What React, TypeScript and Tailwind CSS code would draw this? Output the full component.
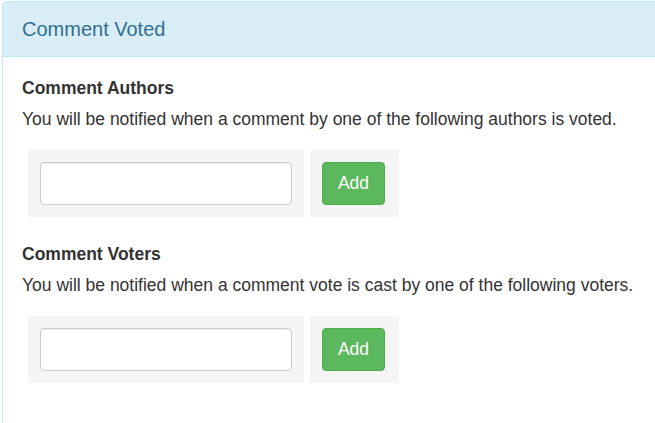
export default function App() {
  const sections = [
    {
      title: "Comment Authors",
      text: "You will be notified when a comment by one of the following authors is voted.",
    },
    {
      title: "Comment Voters",
      text: "You will be notified when a comment vote is cast by one of the following voters.",
    },
  ];

  return (
    <div className="w-[655px] h-[423px] overflow-hidden bg-white font-['Liberation_Sans',Arial,sans-serif] text-[#333]">
      <div className="ml-[2px] mt-[1px] w-[700px] h-[430px] border border-[#bce8f1] rounded-tl-[4px]">
        <div className="bg-[#d9edf7] border-b border-[#bce8f1] px-[19px] py-[15px] rounded-tl-[3px]">
          <h3 className="text-[20px] leading-[24px] text-[#31708f]">Comment Voted</h3>
        </div>
        <div className="px-[19px] pt-[19px]">
          {sections.map((s, i) => (
            <div key={s.title} className={i > 0 ? "mt-[25px]" : ""}>
              <h4 className="text-[17.5px] leading-[25px] font-bold mb-[6px]">{s.title}</h4>
              <p className="text-[17.5px] leading-[25px] mb-[18px]">{s.text}</p>
              <div className="flex gap-[6px] pl-[6px]">
                <div className="w-[276px] p-[12px] bg-[#f5f5f5]">
                  <input
                    type="text"
                    className="block w-full h-[43px] px-3 text-[17.5px] bg-white border border-[#ccc] rounded-[4px] shadow-[inset_0_1px_1px_rgba(0,0,0,0.075)] focus:outline-none"
                  />
                </div>
                <div className="w-[89px] p-[12px] bg-[#f5f5f5]">
                  <button
                    type="button"
                    className="w-[63px] h-[43px] text-[17.5px] text-white bg-[#5cb85c] border border-[#4cae4c] rounded-[4px]"
                  >
                    Add
                  </button>
                </div>
              </div>
            </div>
          ))}
        </div>
      </div>
    </div>
  );
}
